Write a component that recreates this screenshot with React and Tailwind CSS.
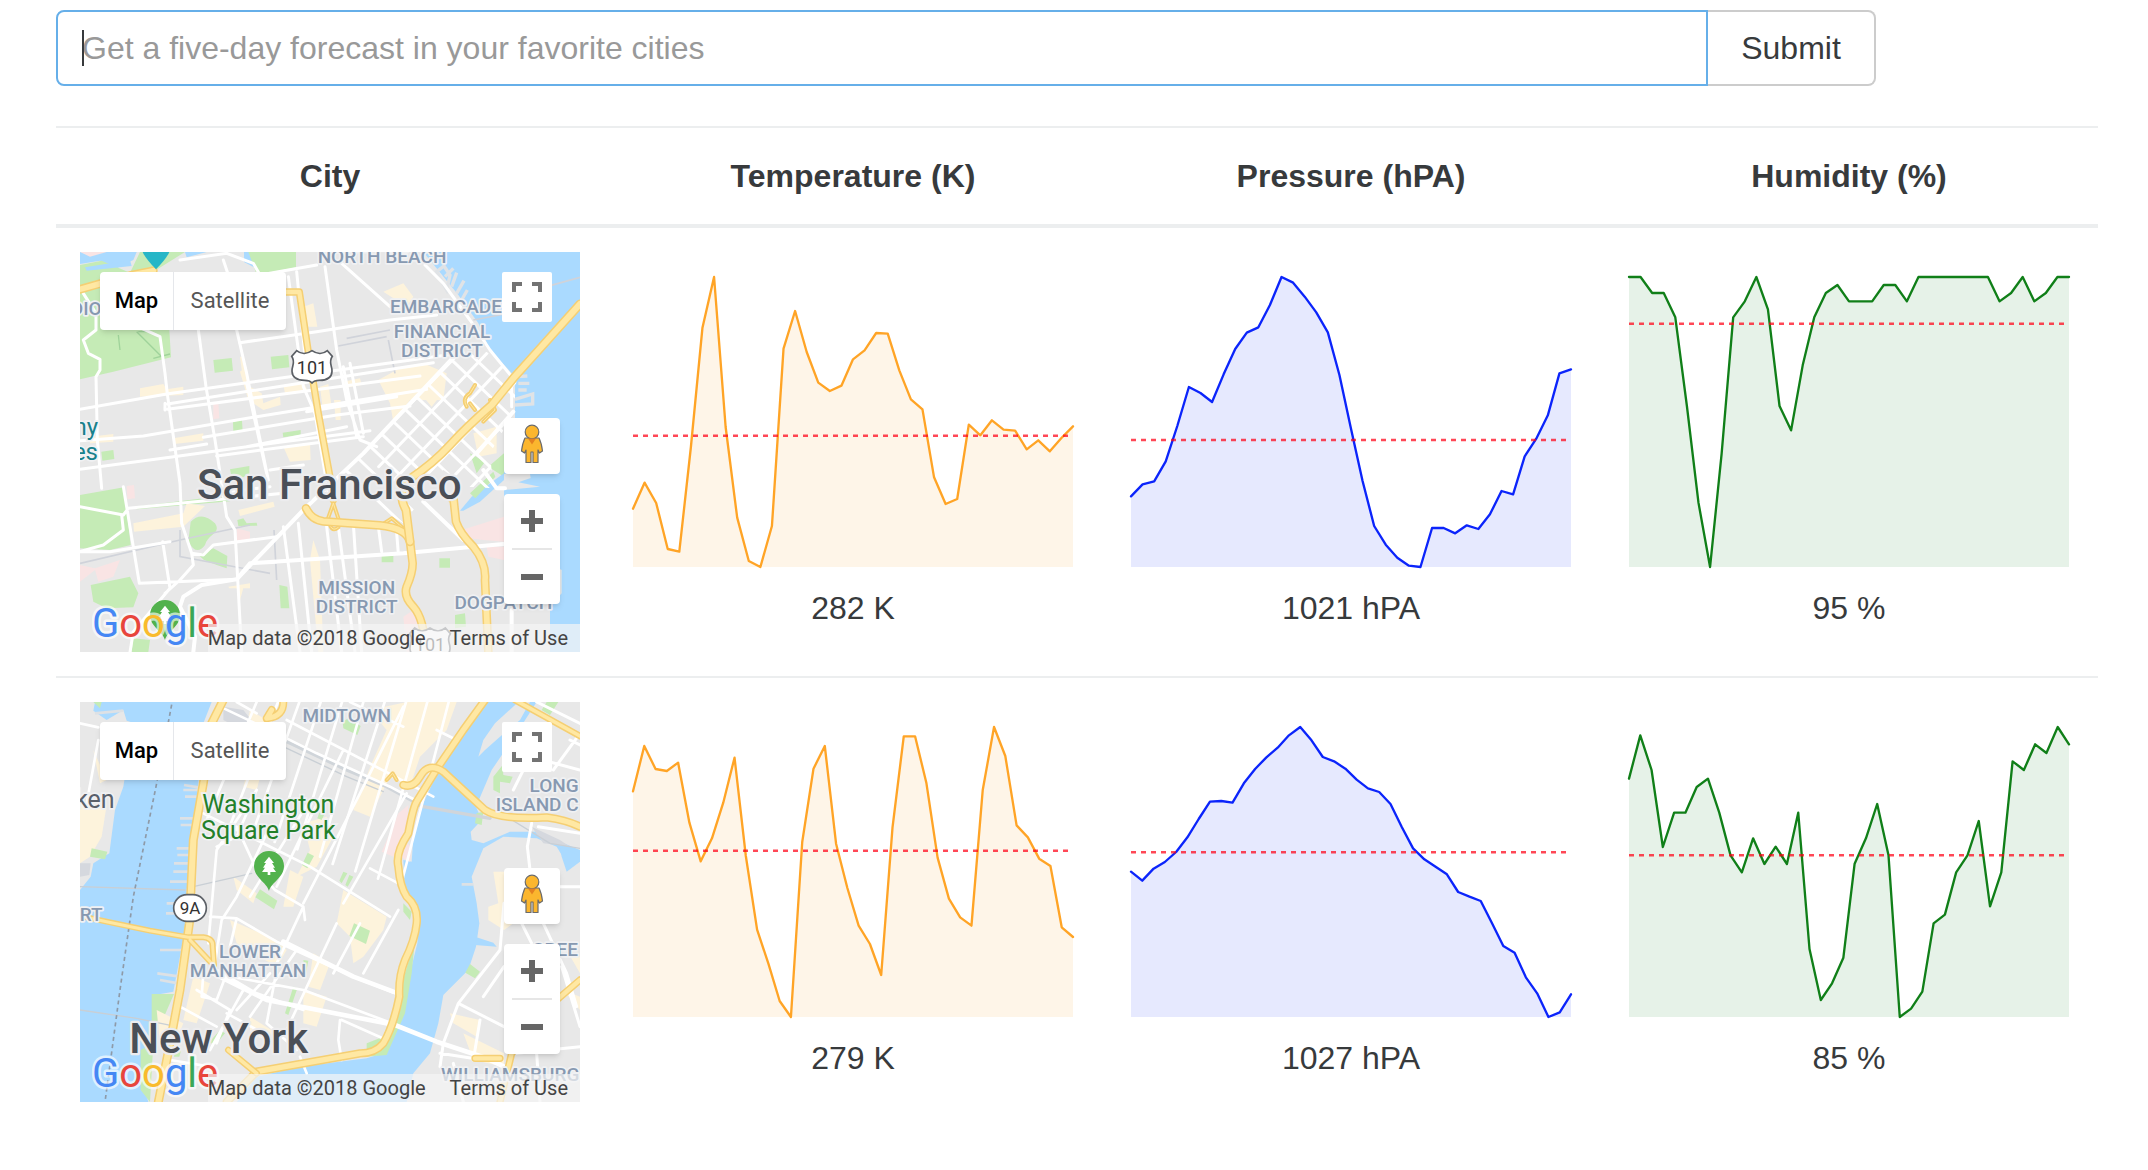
import React from "react";

const CHART_WIDTH = 1320;
const CHART_HEIGHT = 870;
const MARGIN = 15;

// Sample depths are measured downwards from the top of the plot (0) to its floor (870).
const SAN_FRANCISCO = {
  temperature: {
    mean: 476,
    label: "282 K",
    samples: [695, 617, 678, 816, 824, 510, 152, 0, 450, 722, 852, 870, 747, 215, 102, 225, 317, 342, 326, 247, 220, 168, 170, 280, 367, 397, 601, 681, 666, 443, 475, 430, 458, 461, 517, 490, 523, 483, 448],
  },
  pressure: {
    mean: 489,
    label: "1021 hPA",
    samples: [658, 622, 613, 553, 447, 330, 348, 375, 292, 216, 167, 151, 84, 0, 17, 59, 106, 166, 294, 455, 612, 747, 803, 842, 866, 870, 753, 753, 769, 745, 756, 712, 642, 652, 538, 485, 415, 289, 277],
  },
  humidity: {
    mean: 140,
    label: "95 %",
    samples: [0, 0, 48, 48, 121, 387, 677, 870, 530, 121, 73, 0, 97, 387, 460, 265, 121, 48, 24, 73, 73, 73, 24, 24, 73, 0, 0, 0, 0, 0, 0, 0, 73, 48, 0, 73, 48, 0, 0],
  },
};

const NEW_YORK = {
  temperature: {
    mean: 371,
    label: "279 K",
    samples: [193, 57, 126, 132, 107, 287, 403, 334, 227, 92, 387, 608, 710, 822, 870, 345, 125, 57, 350, 483, 596, 651, 744, 302, 28, 28, 167, 392, 515, 571, 596, 189, 0, 87, 295, 331, 395, 417, 601, 630],
  },
  pressure: {
    mean: 376,
    label: "1027 hPA",
    samples: [434, 461, 425, 405, 375, 331, 276, 224, 222, 227, 169, 126, 91, 62, 25, 0, 40, 90, 103, 125, 158, 184, 195, 231, 300, 364, 397, 419, 442, 495, 509, 522, 589, 657, 677, 751, 799, 870, 856, 802],
  },
  humidity: {
    mean: 385,
    label: "85 %",
    samples: [155, 25, 129, 360, 257, 257, 180, 155, 257, 385, 436, 334, 411, 359, 411, 257, 666, 819, 769, 692, 410, 334, 231, 385, 870, 845, 794, 589, 563, 436, 385, 282, 538, 436, 103, 129, 52, 78, 0, 52],
  },
};

function Chart({ series, stroke, fill }) {
  const step = CHART_WIDTH / (series.samples.length - 1);
  const points = series.samples.map((d, i) => `${(MARGIN + i * step).toFixed(1)},${MARGIN + d}`).join(" ");
  const floor = MARGIN + CHART_HEIGHT;
  const right = MARGIN + CHART_WIDTH;
  return (
    <td className="border-b-2 border-[#eceeef] p-6 text-center align-middle group-last:border-b-0">
      <svg viewBox="0 0 1350 900" className="mb-3 block w-full" role="img" aria-label={series.label}>
        <polygon points={`${points} ${right},${floor} ${MARGIN},${floor}`} fill={fill} />
        <polyline points={points} fill="none" stroke={stroke} strokeWidth="7" strokeLinejoin="round" strokeLinecap="round" />
        <line x1={MARGIN} x2={right} y1={MARGIN + series.mean} y2={MARGIN + series.mean} stroke="#ff0015" strokeOpacity="0.72" strokeWidth="7.5" strokeDasharray="15 15" />
      </svg>
      <div>{series.label}</div>
    </td>
  );
}

function Roads({ d, width = 9, color = "#ffffff" }) {
  return <path d={d} fill="none" stroke={color} strokeWidth={width} strokeLinejoin="round" strokeLinecap="round" />;
}

function Highway({ d, width = 24 }) {
  return (
    <g fill="none" strokeLinejoin="round" strokeLinecap="round">
      <path d={d} stroke="#f5cf73" strokeWidth={width} />
      <path d={d} stroke="#ffe8a3" strokeWidth={width - 9} />
    </g>
  );
}

function Label({ x, y, anchor = "middle", children }) {
  return (
    <text x={x} y={y} textAnchor={anchor} className="text-[57px] font-medium" fill="#8799b1" stroke="#f0f1f3" strokeWidth="10" strokeLinejoin="round" paintOrder="stroke">
      {children}
    </text>
  );
}

function CityName({ x, y, children }) {
  return (
    <text x={x} y={y} textAnchor="middle" className="text-[126px] font-medium" fill="#4a4f57" stroke="#ececee" strokeWidth="14" strokeLinejoin="round" paintOrder="stroke">
      {children}
    </text>
  );
}

function ParkPin({ x, y }) {
  return (
    <g transform={`translate(${x} ${y})`}>
      <path d="M0 75C-6 50-45 35-45 0A45 45 0 0 1 45 0C45 35 6 50 0 75Z" fill="#52b24d" />
      <path d="M0-28L15-9H9L18 5H12L21 18H4V27H-4V18H-21L-12 5H-18L-9-9H-15Z" fill="#fff" />
    </g>
  );
}

function Shield({ x, y, opacity = 1 }) {
  return (
    <g transform={`translate(${x} ${y})`} opacity={opacity}>
      <path d="M-46-50C-32-38-14-40 0-50C14-40 32-38 46-50L61-33C48-14 61-6 60 12C59 34 40 39 22 39C10 39 4 42 0 47C-4 42-10 39-22 39C-40 39-59 34-60 12C-61-6-48-14-61-33Z" fill="#fff" stroke="#5c6066" strokeWidth="5" />
      <text y="20" textAnchor="middle" className="text-[54px]" fill="#333">101</text>
    </g>
  );
}

function SanFranciscoMap() {
  const soma = [];
  for (let i = 0; i < 9; i++) {
    soma.push(`M${880 + i * 46} ${640 + i * 40}l420-440`);
  }
  for (let i = 0; i < 13; i++) {
    soma.push(`M${790 + i * 35} ${725 - i * 37}l420 400`);
  }
  return (
    <svg viewBox="30 36 1500 1200" className="absolute inset-0 size-full" role="img" aria-label="Map of San Francisco">
      <defs>
        <clipPath id="soma">
          <path d="M800 720L1000 520 1150 350 1250 335 1340 420 1330 520 1260 640 1270 745 1190 740 1120 690 1000 850 900 790Z" />
        </clipPath>
      </defs>
      <rect x="30" y="36" width="1500" height="1200" fill="#e8e8e8" />
      <path d="M30 36H200L190 60 140 85 90 62 30 72ZM345 36H410L350 52ZM522 36H552V82L522 66Z" fill="#aadaff" />
      <path d="M30 75L95 62 180 98 210 36H345L250 95 310 110V260L298 270 303 352 130 395 30 418ZM535 36H678V82L560 105 550 75Z" fill="#c5ebb6" />
      <path d="M45 82L180 60 185 78 50 92Z" fill="#aadaff" />
      <path d="M430 360L485 354 489 392 434 398ZM602 350L655 345 658 382 606 388ZM489 545L516 541 518 575 490 578ZM638 578L692 570V584L640 592ZM480 688L538 678V700L520 712 484 708ZM94 635L130 630 133 657 97 662ZM30 765L162 742 182 915 120 930 30 925ZM195 800L400 775 490 772 480 784 200 808ZM362 845Q395 812 435 850C455 880 415 880 405 915Q380 950 355 905ZM386 945L430 925 472 948 470 985 440 975 402 960ZM62 1035L180 1010 205 1060 190 1102 110 1105 70 1085ZM502 840L520 835 530 850 560 848 562 857 505 858ZM935 946H970V967H935ZM1108 955H1140V983H1108ZM628 1035L652 1040 658 1105 632 1105ZM1155 1125L1185 1120 1188 1160 1155 1165ZM1255 680L1302 640V710ZM190 1195L240 1200 235 1236H185Z" fill="#c5ebb6" />
      <path d="M200 275L275 350M145 285L150 330M205 275H240M250 355L300 342" stroke="#9fd39a" strokeWidth="4" fill="none" />
      <g fill="#fdf3dc">
        <path d="M210 445L280 432 290 448 340 440V465L210 470ZM510 395L530 380 540 440 575 460 580 490 630 470 632 495 580 510 535 480ZM925 420L980 390 1060 370 1130 400 1120 480 1020 480 970 545 960 490ZM190 850L340 820 350 790 405 798 340 860 192 875ZM505 810L610 785 614 800 510 828ZM310 595L400 580V602L312 612ZM640 435L700 425 712 450 645 460ZM940 155L1000 130 1030 170 1010 200ZM700 200L730 190 742 260 715 260ZM750 440L775 432 785 500 758 505ZM792 480H812V540H797ZM1070 440L1120 455 1085 500 1060 470ZM1210 580L1280 560 1280 640 1225 650ZM730 900L750 960 760 1236H745L720 960ZM475 1040L540 1030V1045H520L510 1080 500 1045H478ZM60 590L130 582V605L60 610ZM640 620L720 610 722 660 660 665ZM820 425L870 415 875 435 820 445ZM510 350L520 350 528 410 518 412Z" />
      </g>
      <path d="M30 36H110L60 50ZM30 975L75 985 150 960 130 1010 85 1025 75 990 30 1025ZM500 865L540 875V905L500 905ZM170 738L192 735 195 775 172 778ZM430 490L445 488 448 535 430 538ZM1175 870L1302 830V905L1240 900 1195 895ZM1250 920H1302V960L1255 950ZM1000 1130L1045 1100 1060 1180 1020 1236H1010Z" fill="#f9e4e4" />
      <path d="M1060 36H1530V1236H1440V1100L1475 1060V990L1302 900V750L1410 740 1345 727 1382 714 1380 702H1302V560L1335 535V410L1260 330 1225 250 1165 165Z" fill="#aadaff" />
      <path d="M1100 95L1122 78 1140 105 1130 150ZM1125 110L1150 85M1145 140L1160 98M1160 160L1182 122M1175 180L1192 150M1340 410L1372 408M1345 430L1378 430M1345 450L1370 450M1335 478L1388 462V492L1335 495" stroke="#e0e3e6" strokeWidth="10" fill="none" />
      <path d="M1170 812L1205 770 1302 700V720L1230 785 1180 812Z" fill="#aadaff" />
      <path d="M1200 640l45 25-25 35ZM1200 760l70-65 6 15-60 65Z" fill="#c5ebb6" />
      <path d="M30 970L330 900 540 855M805 318L950 290M830 295L960 270M955 300L975 400M330 870V950L600 1000M612 870L620 1020M1430 140L1530 112M1210 240L1420 200" fill="none" stroke="#d0d3da" strokeWidth="5" />
      <Roads d="M30 508L290 462 720 402 1180 338M292 492L700 428 1090 368M292 508L640 462 1050 408M30 602L220 588 560 530 1070 448M30 688L300 652 640 605 900 572M400 592L800 525 1020 498M440 648L880 590M510 308L740 275 960 240 1100 225M300 630L410 612M480 755L600 740M600 690L700 675M710 515L980 470M530 620L830 560" width={9} />
      <Roads d="M40 160L78 220V270L40 300 55 340 90 358V390L78 410 82 600 95 745M215 265L270 290 285 400 292 462 330 730 335 850 365 940 400 945 430 915 620 890M385 270L408 440 435 600 470 830 495 870 515 1236M500 270L530 400 560 550 595 720M530 430L590 700M680 95L710 400M655 110L700 440 735 520 775 760M765 80L800 330 830 480 870 600 920 620M820 380L860 590M840 370L880 580M815 70L960 200M1065 75L1120 130 1200 240 1260 330 1325 410 1325 500M160 740L208 1030 500 1018M30 800L160 825 175 805 330 790 430 780 640 760M155 825L160 870 100 915 30 935 120 935 300 905M278 905L300 1045 190 1175 180 1236M365 940L370 975 330 1020 285 1060M640 860L690 1236M685 850L725 1236M770 860L815 1236M805 860L855 1236M850 850L875 1236M925 860L935 935M980 880L985 940M460 60L480 120 560 125M330 60L470 40 550 70 570 105 740 75M285 490V510" width={9} />
      <Roads d="M370 1236L375 1190 330 1100 340 1070 395 1035 500 1018 700 810 880 640 1150 352M540 970L1000 940 1300 912M1060 785L1180 900M500 1018L540 970 620 965M1325 1110V1236M1240 690L1280 745H1305M1330 515L1220 640" width={12} />
      <g clipPath="url(#soma)">
        <Roads d={soma.join("")} width={9} />
      </g>
      <Highway d="M30 148L100 128 190 104 250 92" width={26} />
      <Highway d="M648 156H688L714 330 745 520 778 700 790 780" width={22} />
      <Highway d="M790 790L774 835M790 790L805 835M782 860Q790 875 805 862M1190 500Q1175 475 1200 460L1215 435M1200 490L1215 510M1260 480L1275 510 1240 545M935 855L965 835 1000 865M1110 745L1145 785 1160 755" width={12} />
      <Highway d="M708 805Q725 840 760 844L930 856Q1010 865 1020 905L1028 970Q1028 1000 1010 1040Q1000 1070 1030 1100Q1065 1140 1065 1236" width={26} />
      <Highway d="M1530 192L1330 415 1265 495Q1190 560 1140 615T1015 720Q980 760 1008 810L1020 905" width={27} />
      <Highway d="M1150 770L1158 845Q1170 880 1210 920Q1250 970 1245 1020L1255 1236" width={26} />
      <path d="M218 36H298Q290 55 258 88Q226 55 218 36Z" fill="#26b6c7" />
      <Shield x={726} y={382} />
      <Shield x={1080} y={1214} />
      <Label x={936} y={68}>NORTH BEACH</Label>
      <Label x={1296} y={219} anchor="end">EMBARCADE</Label>
      <Label x={1116} y={294}>FINANCIAL</Label>
      <Label x={1116} y={350}>DISTRICT</Label>
      <Label x={95} y={225} anchor="end">DIO</Label>
      <Label x={860} y={1061}>MISSION</Label>
      <Label x={860} y={1118}>DISTRICT</Label>
      <Label x={1300} y={1106}>DOGPATCH</Label>
      <g className="text-[72px]" fill="#18808c" stroke="#f0f1f3" strokeWidth="10" paintOrder="stroke" textAnchor="end">
        <text x="84" y="585">ny</text>
        <text x="84" y="661">es</text>
      </g>
      <CityName x={778} y={778}>San Francisco</CityName>
      <ParkPin x={285} y={1125} />
    </svg>
  );
}

function NewYorkMap() {
  const avenues = [];
  for (let i = 0; i < 10; i++) {
    avenues.push(`M${560 + i * 64} 36L${410 + i * 68 - (i > 5 ? 30 : 0)} ${390 + i * 22}`);
  }
  return (
    <svg viewBox="30 36 1500 1200" className="absolute inset-0 size-full" role="img" aria-label="Map of New York">
      <rect x="30" y="36" width="1500" height="1200" fill="#aadaff" />
      <path d="M30 36H75L70 62 110 90 160 60 170 92 190 98 160 290 135 360 118 490 70 520 62 560 30 600Z" fill="#e8e8e8" />
      <path d="M30 345H110L95 440 60 500 30 520ZM70 180L110 270 90 280Z" fill="#fdf3dc" />
      <path d="M65 475L112 485 105 508 60 500ZM70 36H95L90 55Z" fill="#c5ebb6" />
      <path d="M30 520H62L58 555 30 560Z" fill="#d5d8de" />
      <path d="M425 36H1245L1190 120 1105 240 1060 340 1030 440 1025 515 1000 510 1005 610 1050 680 1042 760 1020 850 1000 950 965 1030 940 1090 890 1105 690 1130 560 1160 500 1236H235L212 1150 245 1000 255 915 310 905 345 720 350 600 370 440 385 280 400 100Z" fill="#e8e8e8" />
      <path d="M245 912H312L280 985 245 1000ZM1035 750L1025 850 1005 970 950 1095 890 1100 890 1060 940 1040 990 900ZM212 1080L250 1060 240 1236 212 1200Z" fill="#c5ebb6" />
      <path d="M1345 36H1380L1350 90 1290 140 1245 180 1225 200 1240 150 1275 100ZM1450 36H1530V480L1470 455 1410 425 1320 425 1240 460 1205 450 1202 425 1235 390 1218 350 1265 240 1340 130 1400 36Z" fill="#e8e8e8" />
      <path d="M1240 475L1300 440 1400 445 1460 470 1490 520 1530 515V1236H1010L1030 1150 1080 1090 1105 1000 1120 915 1195 840 1218 770 1228 700 1220 640 1205 560Z" fill="#e8e8e8" />
      <path d="M1215 740L1270 758 1280 770 1215 765ZM1470 470L1530 500V515L1490 545 1475 500Z" fill="#aadaff" />
      <g stroke="#dde1e5" strokeWidth="8">
        <path d="M342 285L385 292M340 300H385M345 320H380M330 385H378M332 405H375M320 475H370M322 495H370M312 520H368M310 545H365M300 575H360M290 640H350M288 670H345M270 780H340M262 850L330 860M270 870L325 880M380 115H405M75 70L160 62M1175 583H1210" />
      </g>
      <g fill="#fdf3dc">
        <path d="M900 60L1010 36 1160 36 1130 120 1050 200 1020 290 960 260 900 380 850 360 905 220 950 120ZM540 60L590 90 570 160 520 150ZM700 400L770 380 790 440 740 530 680 560 720 480ZM660 540L700 560 670 650 640 650ZM560 130L600 150 560 300 520 290ZM820 600L950 680 940 720 880 800 850 820 840 740 800 700ZM490 560L560 610 550 640 500 600ZM480 690L620 750 650 780 620 830 500 760ZM370 860L420 880 380 1000 340 990ZM700 900L770 920 740 1010 700 1000ZM730 790L780 820 750 900 715 890ZM260 960L340 1000 300 1100 270 1060ZM540 980L620 1030 610 1060 540 1030ZM1270 545H1302V620L1330 700 1302 720 1255 690 1255 650 1285 640ZM1140 970L1230 990 1220 1040 1150 1000ZM1180 1030L1302 1090V1130L1210 1110ZM1480 900L1530 920V960ZM1490 780L1530 800V850Z" />
      </g>
      <path d="M985 370L1015 345 1010 440 970 500 935 485ZM995 450L1025 470 1020 515 990 500Z" fill="#f9e4e4" />
      <path d="M460 50L520 60 560 110 520 120 460 90ZM1385 410L1470 450 1500 470 1420 460Z" fill="#d5d8de" />
      <path d="M818 95L835 85 872 108 862 135 820 115ZM570 598L622 632 612 658 556 622ZM852 700L900 722 888 762 838 738ZM713 488L732 498 712 535 696 525ZM820 545L832 550 815 580 808 572ZM838 555L850 560 833 590 826 585ZM748 368L762 375 755 390 742 385ZM1200 822L1230 845 1215 865 1186 848ZM670 890L682 895 655 975 645 970ZM700 810L715 812 708 850ZM1270 260L1298 225 1300 255 1328 260 1320 280 1290 275 1290 310 1270 300ZM1220 370L1240 365 1235 405 1215 400ZM415 1060L450 1020 465 1030 440 1060ZM320 1060L335 1075 328 1100 312 1100ZM1430 36H1465L1440 75 1415 60ZM1000 640L1025 665 1020 690 1000 665Z" fill="#c5ebb6" />
      <Roads d="M640 150L830 240 950 290 1060 350 1260 385" width={10} color="#d0d5da" />
      <Roads d="M640 170L830 260 940 305M30 960L200 985 320 1010M30 590L345 600M370 590L545 550M1310 380L1440 460 1530 475" width={4} color="#c9cfd5" />
      <Roads d={avenues.join("")} width={8} />
      <Roads d="M30 100L85 112M85 150L50 340M450 50L620 130M500 36L560 70M620 130L740 190 960 290 1035 330M650 90L1090 320M840 36L1000 110M1100 120L1160 150M400 370L560 450 720 530 960 680M500 410L560 540 615 600 700 650M440 470L500 440 560 300M900 535L985 580M540 620L720 330M620 590L820 180M700 640L870 310 1000 50M820 640L1010 310M880 850L985 660M620 820L700 650 705 690M590 430L500 620 455 690 430 850M560 300L440 480 415 760M420 680L500 685 620 755 850 860 975 910M500 685L480 770" width={8} />
      <Roads d="M430 850L700 900 980 1005M400 850L395 920 440 930 470 850M440 840L560 910 700 960M470 970L580 1030M500 960L600 850M540 980L680 780M650 1020L720 870 800 700M790 850L870 700M330 950L440 1010M380 900L480 960 440 1060M420 1080L520 900M810 990L805 1050 815 1110M815 990L950 1050M690 1100L710 1150M620 840L590 1000 680 1080M300 1110L420 1130" width={8} />
      <Roads d="M975 1005L1100 1055 1250 1105 1302 1130M430 850L590 930 975 1005M640 755L850 860 970 905" width={14} />
      <Roads d="M1385 400L1372 470 1380 540M1302 640L1290 780 1165 940 1120 1060 1110 1130M1165 940L1302 1010M1110 1090L1240 1110M1420 700L1490 850 1520 950M1355 700L1385 760M1475 830L1530 1010M1340 1090L1530 1070M1230 990L1210 1110M1400 36L1530 100M1470 590L1530 590M1330 300L1380 200 1530 240M1450 240L1530 130M1500 150L1530 165M1405 410L1530 430M1400 1090L1410 1236M1150 1120L1180 1236M1302 830L1240 920" width={9} />
      <path d="M305 44L258 290 190 620 150 900 105 1236" fill="none" stroke="#8e9aa8" strokeWidth="5" strokeDasharray="12 10" />
      <Highway d="M460 30L425 100 400 280 370 450 358 700 330 900 300 1060 265 1236" width={27} />
      <Highway d="M30 678L110 695 240 722 355 742 400 742Q430 745 428 770L432 825M360 750L425 820" width={18} />
      <Highway d="M640 36Q640 80 590 85L605 60" width={24} />
      <Highway d="M1245 30L1180 120 1105 230 1040 335Q1030 350 1015 430Q975 490 985 530Q990 590 1010 620Q1045 650 1040 700Q1035 750 1005 810Q985 860 988 920Q970 1010 940 1060Q915 1090 870 1090L560 1145 470 1236" width={25} />
      <Highway d="M475 1080L560 1150" width={20} />
      <Highway d="M950 270L968 250 980 270" width={12} />
      <Highway d="M1000 285Q1030 295 1050 260Q1075 215 1120 245Q1190 310 1245 360Q1290 390 1430 382Q1490 390 1530 410" width={25} />
      <Highway d="M1335 30L1530 138" width={20} />
      <Highway d="M1530 870L1460 930 1325 1090 1290 1236M1215 1105L1290 1105" width={22} />
      <g transform="translate(360 654)">
        <rect x="-49" y="-40" width="98" height="80" rx="40" fill="#fff" stroke="#5c6066" strokeWidth="5" />
        <text y="18" textAnchor="middle" className="text-[51px]" fill="#333">9A</text>
      </g>
      <Label x={830} y={95}>MIDTOWN</Label>
      <Label x={1526} y={305} anchor="end">LONG</Label>
      <Label x={1526} y={362} anchor="end">ISLAND C</Label>
      <Label x={98} y={692} anchor="end">RT</Label>
      <Label x={540} y={803}>LOWER</Label>
      <Label x={534} y={860}>MANHATTAN</Label>
      <Label x={1524} y={797} anchor="end">GREE</Label>
      <Label x={1528} y={1174} anchor="end">WILLIAMSBURG</Label>
      <text x="134" y="354" textAnchor="end" className="text-[75px]" fill="#59606b" stroke="#f0f1f3" strokeWidth="10" paintOrder="stroke">ken</text>
      <g className="text-[75px]" fill="#24802a" stroke="#f0f1f3" strokeWidth="10" paintOrder="stroke" textAnchor="middle">
        <text x="595" y="369">Washington</text>
        <text x="595" y="446">Square Park</text>
      </g>
      <ParkPin x={597} y={528} />
      <CityName x={446} y={1089}>New York</CityName>
    </svg>
  );
}

function GoogleLogo() {
  return (
    <svg viewBox="0 0 130 48" className="absolute bottom-0 left-3 h-12 w-32.5" role="img" aria-label="Google">
      <text x="0" y="33" className="text-[40px]" stroke="#ffffff" strokeOpacity="0.65" strokeWidth="5" strokeLinejoin="round" paintOrder="stroke">
        <tspan fill="#4587f4">G</tspan>
        <tspan fill="#e8453c">o</tspan>
        <tspan fill="#f9bb2d">o</tspan>
        <tspan fill="#4587f4">g</tspan>
        <tspan fill="#3aa757">l</tspan>
        <tspan fill="#e8453c">e</tspan>
      </text>
    </svg>
  );
}

function Pegman() {
  return (
    <svg viewBox="0 0 24 40" className="h-10 w-6" aria-hidden="true">
      <g stroke="#6b6b6b" strokeWidth="1.2" strokeLinejoin="round">
        <path d="M5 14H19C21 18 22 23 22.5 27L19.5 29 18 26V38.500H13V28H11V38.500H6V26L4.500 29 1.500 27C2 23 3 18 5 14Z" fill="#fbb62e" />
        <circle cx="12" cy="8" r="6.800" fill="#fbb62e" />
      </g>
      <path d="M8 14.500H16L12 20.500Z" fill="#e5811f" />
    </svg>
  );
}

function MapCard({ children }) {
  return (
    <div className="relative h-[400px] overflow-hidden font-['Roboto',sans-serif]">
      {children}
      <GoogleLogo />
      <div className="absolute top-5 left-5 flex h-[58px] overflow-hidden rounded-sm bg-white text-[22px] shadow-md">
        <button type="button" className="w-[74px] border-r border-gray-200 font-medium text-black">Map</button>
        <button type="button" className="w-28 text-[#565656]">Satellite</button>
      </div>
      <button type="button" aria-label="Toggle fullscreen" className="absolute top-5 right-7 flex size-[50px] items-center justify-center rounded-xs bg-white">
        <svg viewBox="0 0 30 30" className="size-[30px]" fill="none" stroke="#737373" strokeWidth="4" aria-hidden="true">
          <path d="M2 10V2H10M20 2H28V10M28 20V28H20M10 28H2V20" />
        </svg>
      </button>
      <div className="absolute right-5 bottom-12 flex w-14 flex-col gap-5">
        <button type="button" aria-label="Street View" className="flex h-14 items-center justify-center rounded-sm bg-white pb-1 shadow-md">
          <Pegman />
        </button>
        <div className="flex h-[110px] flex-col items-center rounded-sm bg-white shadow-md">
          <button type="button" aria-label="Zoom in" className="flex w-full flex-1 items-center justify-center">
            <svg viewBox="0 0 22 22" className="size-[22px]" stroke="#666" strokeWidth="6" aria-hidden="true"><path d="M0 11H22M11 0V22" /></svg>
          </button>
          <div className="h-0.5 w-10 bg-[#e6e6e6]" />
          <button type="button" aria-label="Zoom out" className="flex w-full flex-1 items-center justify-center">
            <svg viewBox="0 0 22 22" className="size-[22px]" stroke="#666" strokeWidth="6" aria-hidden="true"><path d="M0 11H22" /></svg>
          </button>
        </div>
      </div>
      <div className="absolute right-0 bottom-0 flex h-7 items-center bg-[#f5f5f5]/70 text-[20px] whitespace-nowrap text-[#444]">
        <span className="pr-3">Map data ©2018 Google</span>
        <a href="#terms" className="px-3">Terms of Use</a>
      </div>
    </div>
  );
}

function CityRow({ map, city }) {
  return (
    <tr className="group">
      <td className="border-b-2 border-[#eceeef] p-6 align-middle group-last:border-b-0">
        <MapCard>{map}</MapCard>
      </td>
      <Chart series={city.temperature} stroke="#ffa426" fill="#fef5e8" />
      <Chart series={city.pressure} stroke="#0b24fb" fill="#e6e9fe" />
      <Chart series={city.humidity} stroke="#107f18" fill="#e6f2e8" />
    </tr>
  );
}

export default function App() {
  return (
    <main className="bg-white pt-2.5 pr-[50px] pl-14 font-['Liberation_Sans',sans-serif] text-[32px] leading-[48px] text-[#373a3c]">
      <form className="mb-10 flex max-w-[1820px]" onSubmit={(e) => e.preventDefault()}>
        <div className="relative flex-1">
          <input
            type="text"
            aria-label="City"
            placeholder="Get a five-day forecast in your favorite cities"
            className="block h-[76px] w-full rounded-l-lg border-2 border-[#66afe9] bg-white px-6 outline-none placeholder:text-[#999]"
          />
          <span aria-hidden="true" className="absolute top-5 left-[26px] h-9 w-0.5 bg-[#373a3c]" />
        </div>
        <button type="submit" className="w-42 rounded-r-lg border-2 border-l-0 border-[#ccc] bg-white">Submit</button>
      </form>
      <table className="w-full table-fixed border-separate border-spacing-0">
        <thead>
          <tr>
            <th className="w-[548px] border-t-2 border-b-4 border-[#eceeef] p-6">City</th>
            <th className="border-t-2 border-b-4 border-[#eceeef] p-6">Temperature (K)</th>
            <th className="border-t-2 border-b-4 border-[#eceeef] p-6">Pressure (hPA)</th>
            <th className="border-t-2 border-b-4 border-[#eceeef] p-6">Humidity (%)</th>
          </tr>
        </thead>
        <tbody>
          <CityRow map={<SanFranciscoMap />} city={SAN_FRANCISCO} />
          <CityRow map={<NewYorkMap />} city={NEW_YORK} />
        </tbody>
      </table>
    </main>
  );
}
